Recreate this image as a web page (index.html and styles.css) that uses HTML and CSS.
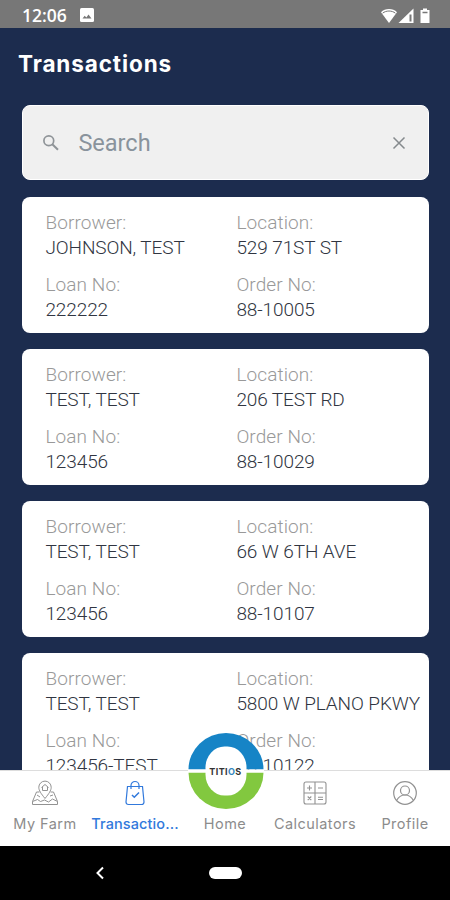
FILE: index.html
```html
<!DOCTYPE html>
<html lang="en">
  <head>
    <meta charset="UTF-8" />
    <meta name="viewport" content="width=device-width, initial-scale=1.0" />
    <title>Transactions</title>
    <link rel="stylesheet" href="styles.css">
  </head>
  <body>
    <div class="status-bar">
      <span class="time">12:06</span>
      <svg class="photo-icon" width="14" height="14" viewBox="0 0 14 14">
        <rect width="14" height="14" rx="1.5" fill="#fff" />
        <path d="M2.5 10.5l2.2-2.8 1.7 1.8 2.1-3 3 4z" fill="#777" />
      </svg>
      <svg class="signal-icons" width="52" height="18" viewBox="0 0 52 18">
        <path d="M1 6.2C5 1.9 13 1.9 17 6.200L9 17z" fill="#fff" />
        <path d="M2.600 7.200C6 4.300 12 4.300 15.400 7.200" fill="none" stroke="#777" stroke-width="1" />
        <path d="M18.500 17L33.500 2.500V17z" fill="#fff" />
        <path d="M29.500 8.500h2v7h-2z" fill="#777" />
        <path d="M43 2.500h4v1.500h2.500v13h-9V4H43z" fill="#fff" />
        <path d="M42.500 6.500h5" stroke="#777" stroke-width="1.500" />
      </svg>
    </div>

    <div class="header">
      <h1>Transactions</h1>
    </div>

    <div class="main-content">
      <div class="search-box">
        <svg width="18" height="18" viewBox="0 0 18 18" fill="none" stroke="#8f9498" stroke-width="1.700">
          <circle cx="6.800" cy="6.800" r="4.900" />
          <path d="M10.300 10.300l5.700 5.500" stroke-width="2" />
        </svg>
        <span class="search-text">Search</span>
        <svg width="14" height="14" viewBox="0 0 14 14" stroke="#858a8d" stroke-width="1.500">
          <path d="M1.500 1.500l11 11M12.500 1.500l-11 11" />
        </svg>
      </div>

      <div class="card">
        <div class="field"><span class="label">Borrower:</span><span class="value">JOHNSON, TEST</span></div>
        <div class="field"><span class="label">Location:</span><span class="value">529 71ST ST</span></div>
        <div class="field"><span class="label">Loan No:</span><span class="value">222222</span></div>
        <div class="field"><span class="label">Order No:</span><span class="value">88-10005</span></div>
      </div>
      <div class="card">
        <div class="field"><span class="label">Borrower:</span><span class="value">TEST, TEST</span></div>
        <div class="field"><span class="label">Location:</span><span class="value">206 TEST RD</span></div>
        <div class="field"><span class="label">Loan No:</span><span class="value">123456</span></div>
        <div class="field"><span class="label">Order No:</span><span class="value">88-10029</span></div>
      </div>
      <div class="card">
        <div class="field"><span class="label">Borrower:</span><span class="value">TEST, TEST</span></div>
        <div class="field"><span class="label">Location:</span><span class="value">66 W 6TH AVE</span></div>
        <div class="field"><span class="label">Loan No:</span><span class="value">123456</span></div>
        <div class="field"><span class="label">Order No:</span><span class="value">88-10107</span></div>
      </div>
      <div class="card">
        <div class="field"><span class="label">Borrower:</span><span class="value">TEST, TEST</span></div>
        <div class="field"><span class="label">Location:</span><span class="value">5800 W PLANO PKWY</span></div>
        <div class="field"><span class="label">Loan No:</span><span class="value">123456-TEST</span></div>
        <div class="field"><span class="label">Order No:</span><span class="value">88-10122</span></div>
      </div>
    </div>

    <div class="tab-bar">
      <a class="tab">
        <svg width="28" height="26" viewBox="0 0 28 26" fill="none" stroke="#929292" stroke-width="1">
          <path d="M14 18.500C10 13.500 7.800 10.500 7.800 7.300a6.200 6.200 0 0 1 12.400 0C20.200 10.500 18 13.500 14 18.500z" />
          <path d="M10.500 7.500L14 4.500l3.500 3M11.500 7v3.500h5V7" />
          <path d="M8.500 12H5.500L1.500 21.500v3h25v-3L22.500 12h-3M1.500 21.500l5-2 3 2 4-1.500 4 2 4-3 5 2.500M6 15l3 2M19 16l3-1" />
        </svg>
        <span>My Farm</span>
      </a>
      <a class="tab active">
        <svg width="28" height="26" viewBox="0 0 28 26" fill="none" stroke="#3179dc" stroke-width="1.200">
          <path d="M6.500 6.500h15l1.500 15.500q0 2.500-2.500 2.500h-13Q5 24.500 5 22z" />
          <path d="M10 9V5.500a4 4 0 0 1 8 0V9" />
          <path d="M11 15l2.300 2.300L18 12.500" stroke-width="1.500" />
        </svg>
        <span>Transactio...</span>
      </a>
      <a class="tab home">
        <span>Home</span>
        <div class="home-logo">
          <svg width="76" height="76" viewBox="0 0 76 76">
            <path d="M.5 36.500a37.500 36.500 0 0 1 75 0z" fill="#1684c6" />
            <path d="M.5 39.500a37.500 36.500 0 0 0 75 0z" fill="#82c83f" />
            <path d="M0 38h76" stroke="#fff" stroke-width="3" />
            <rect x="17.500" y="13.500" width="41" height="49" rx="19" ry="21" fill="#fff" />
          </svg>
          <span class="logo-text">TITI<i class="o-blue">O</i>S</span>
        </div>
      </a>
      <a class="tab">
        <svg width="28" height="26" viewBox="0 0 28 26" fill="none" stroke="#929292" stroke-width="1.100">
          <rect x="3" y="2" width="22" height="22" rx="2" />
          <path d="M14 2v22M3 13h22" />
          <path d="M6 8h5M8.500 5.500v5M17 8h5M6.700 16.500l3.600 3.600M10.300 16.500l-3.600 3.600M17 17.300h5M17 19.500h5" />
        </svg>
        <span>Calculators</span>
      </a>
      <a class="tab">
        <svg width="28" height="26" viewBox="0 0 28 26" fill="none" stroke="#929292" stroke-width="1.200">
          <circle cx="14" cy="13" r="11.300" />
          <circle cx="14" cy="10.500" r="4.500" />
          <path d="M5.500 20.500c2-3.500 5-5.500 8.500-5.500s6.500 2 8.500 5.500" />
        </svg>
        <span>Profile</span>
      </a>
    </div>

    <div class="system-nav">
      <svg width="10" height="14" viewBox="0 0 10 14" fill="none" stroke="#fff" stroke-width="2">
        <path d="M8 1.500L2.500 7 8 12.500" />
      </svg>
      <div class="home-pill"></div>
    </div>
  </body>
</html>
```
FILE: styles.css
```css
* {
  box-sizing: border-box;
}
html, body {
  height: 100%;
  margin: 0;
  padding: 0;
}
body {
  font-family: Roboto, sans-serif;
  background-color: #1c2c4e;
  display: flex;
  flex-direction: column;
  overflow: hidden;
}
.status-bar {
  flex: 0 0 28px;
  background-color: #777;
  color: #fff;
  display: flex;
  align-items: center;
  padding: 1px 18px 0 22px;
}
.time {
  font-family: "Open Sans", sans-serif;
  font-size: 17.5px;
  font-weight: 600;
  width: 58px;
}
.signal-icons {
  margin-left: auto;
}
.header {
  flex: 0 0 77px;
  padding: 20px 18px 0;
}
.header h1 {
  margin: 0;
  color: #fff;
  font-family: Inter, sans-serif;
  font-size: 22.5px;
  line-height: 32px;
  font-weight: 700;
  letter-spacing: 0.9px;
}
.main-content {
  flex: 1 1 0;
  min-height: 0;
  overflow: hidden;
  padding: 0 21.5px 0 22.4px;
}
.search-box {
  height: 75px;
  margin-bottom: 17.4px;
  padding: 0 22px 0 19px;
  display: flex;
  align-items: center;
  background-color: #f0f0f0;
  border: 1px solid #fff;
  border-radius: 8px;
}
.search-text {
  flex: 1;
  margin-left: 18px;
  color: #89939c;
  font-size: 23.5px;
}
.card {
  height: 136px;
  margin-bottom: 15.9px;
  padding: 12.6px 0 0 23px;
  display: grid;
  grid-template-columns: 191px 1fr;
  grid-auto-rows: 51px;
  row-gap: 11px;
  background-color: #fff;
  border-radius: 8px;
}
.field {
  display: flex;
  flex-direction: column;
  font-size: 19px;
  line-height: 25.5px;
  white-space: nowrap;
}
.label {
  color: #999;
  font-weight: 300;
  letter-spacing: 0.1px;
}
.value {
  color: #303541;
  font-weight: 300;
  letter-spacing: -0.1px;
}
.tab-bar {
  flex: 0 0 76px;
  background-color: #fff;
  border-top: 1px solid #ddd;
  display: grid;
  grid-template-columns: repeat(5, 1fr);
}
.tab {
  position: relative;
  display: flex;
  flex-direction: column;
  align-items: center;
  padding-top: 9px;
  color: #8c8c8c;
  font-family: Inter, sans-serif;
  font-size: 14.5px;
  line-height: 20px;
  letter-spacing: 0.45px;
  white-space: nowrap;
}
.tab > span {
  margin-top: 8px;
}
.tab.active {
  color: #3179dc;
  font-weight: 500;
  letter-spacing: 0.1px;
}
.tab.home {
  padding-top: 35px;
}
/* round logo sits across the top edge of the bar */
.home-logo {
  position: absolute;
  top: -38px;
  left: 7.5px;
  width: 76px;
  height: 76px;
}
.logo-text {
  position: absolute;
  left: 0;
  right: 0;
  top: 33px;
  text-align: center;
  color: #333;
  font-size: 9px;
  line-height: 12px;
  font-weight: 700;
  letter-spacing: 0.4px;
}
.o-blue {
  font-style: normal;
  color: #3186be;
}
.system-nav {
  flex: 0 0 54px;
  background-color: #000;
  display: flex;
  align-items: center;
  padding-left: 95px;
}
.home-pill {
  width: 33px;
  height: 12px;
  margin-left: 104px;
  background-color: #fff;
  border-radius: 6px;
}
```
